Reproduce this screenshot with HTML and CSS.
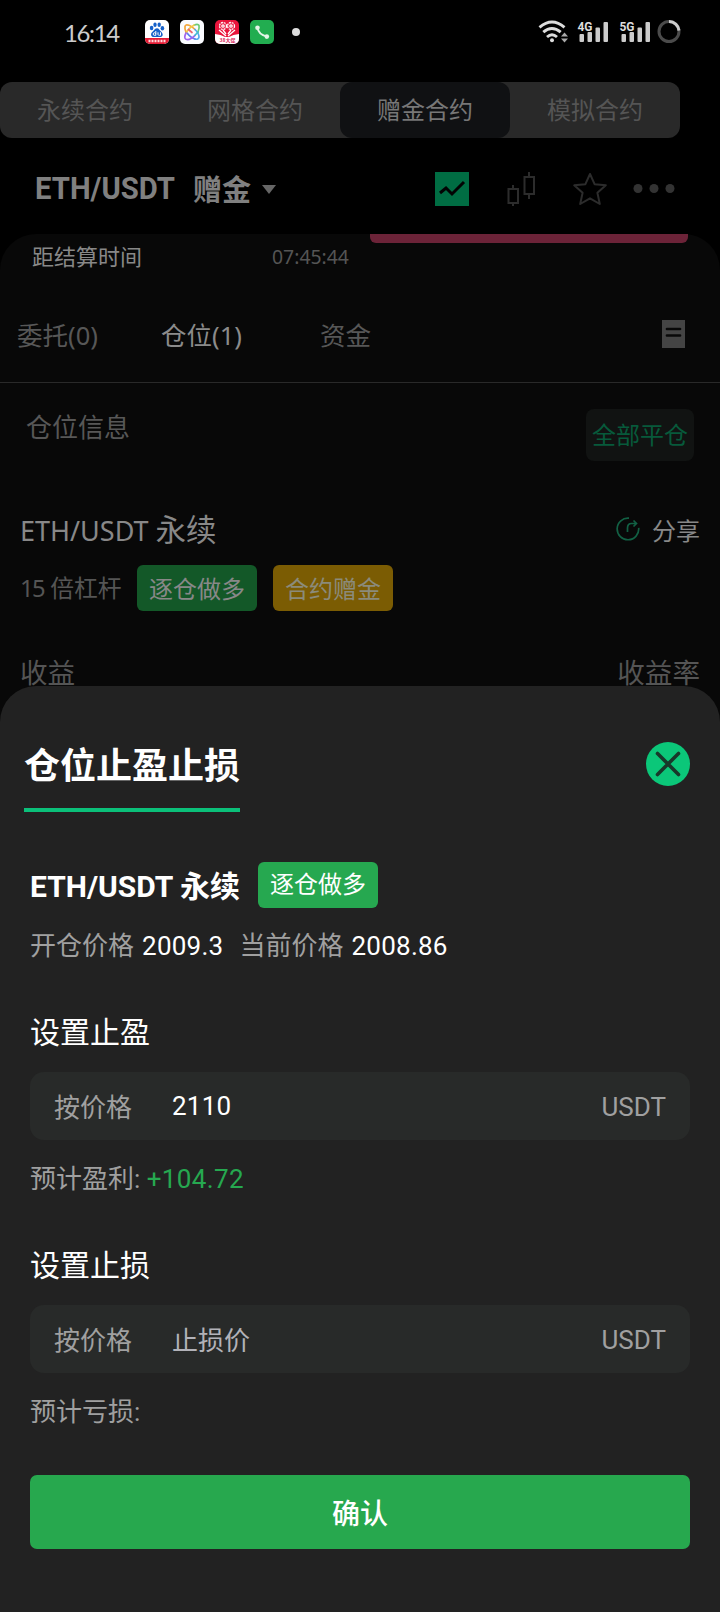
FILE: index.html
```html
<!DOCTYPE html>
<html lang="zh-CN">
<head>
<meta charset="utf-8">
<title>仓位止盈止损</title>
<link rel="stylesheet" href="styles.css">
</head>
<body>
<div class="screen">
  <header class="status">
    <span class="clock">16:14</span>
    <div class="apps">
      <svg class="app" viewBox="0 0 24 24"><defs><clipPath id="r"><rect width="24" height="24" rx="5"/></clipPath></defs><g clip-path="url(#r)"><rect width="24" height="24" fill="#fff"/><g fill="#1761c9"><ellipse cx="6.600" cy="8" rx="1.800" ry="2.300"/><ellipse cx="10" cy="4.800" rx="1.700" ry="2.300"/><ellipse cx="14.200" cy="4.800" rx="1.700" ry="2.300"/><ellipse cx="17.400" cy="8.200" rx="1.800" ry="2.300"/><path d="M12 8.200c2 0 2.600 2 4 3.200 2.800 2.400 2 5.600-1 5.600H9c-3.400 0-4-3.600-1-5.800 1.400-1.200 2-3 4-3z"/></g><path d="M10.800 11v4.300H9.300a1.300 1.300 0 1 1 1.500-1.500M13 12.300v2.200q.3.900 1.300.8h1.200v-3" fill="none" stroke="#fff" stroke-width="1"/><rect y="18" width="24" height="6" fill="#e51c35"/><path d="M3.500 21h17" stroke="#ffd7db" stroke-width="2.500" stroke-dasharray="2 1"/></g></svg>
      <svg class="app" viewBox="0 0 24 24"><rect width="24" height="24" rx="5" fill="#fafbff"/><g fill="none" stroke-width="1.700" stroke-linecap="round"><path d="M6 12Q4.500 9 5 6.500 5.500 4 9 5.300q3 1.200 6 4.200" stroke="#f3a63b"/><path d="M15 9.500q4 4 4 7.500-.5 3-4 2" stroke="#53a9ed"/><path d="M15 19q-4-1-8-6" stroke="#5b7df0"/><path d="M18 12q1.700-4 1-6.500-1-2-5-.3" stroke="#6dca77"/><path d="M14 5.200Q9 7.500 6 13" stroke="#f2ca45"/><path d="M6 13q-2.500 5 0 6.300 4 1.200 9-4" stroke="#a063ed"/><path d="M15 15.300l3-3.300" stroke="#3fbdd0"/><path d="m8.500 9.500 3.500 3" stroke="#ed6670"/></g></svg>
      <svg class="app" viewBox="0 0 24 24"><g clip-path="url(#r)"><rect width="24" height="24" fill="#e9153c"/><g fill="none" stroke="#fff" stroke-width="1.300"><circle cx="8" cy="6" r="3.500" stroke-dasharray="2 .8"/><circle cx="16" cy="6" r="3.500" stroke-dasharray="2 .8"/><circle cx="8" cy="6" r="1.200"/><circle cx="16" cy="6" r="1.200"/><path d="m4 10 7 6M20 10l-7 6M8 10l3 4M16 10l-3 4"/></g><path d="M0 14q6 .5 10 3h4q4-2.500 10-3v10H0z" fill="#fff"/></g><text class="app-caption" x="4.500" y="22">38大促</text></svg>
      <svg class="app" viewBox="0 0 24 24"><rect width="24" height="24" rx="5" fill="#22ad50"/><path d="M7.500 8q1.200 6.500 9 8.500" fill="none" stroke="#e4f5e8" stroke-width="1.800"/><circle cx="7.500" cy="7.800" r="2.300" fill="#e4f5e8"/><circle cx="16.800" cy="16.600" r="2.300" fill="#e4f5e8"/></svg>
    </div>
    <i class="dot"></i>
    <svg class="signals" viewBox="0 0 144 26"><g fill="none" stroke="#ddd" stroke-width="2.900"><path d="M2.500 7.300q12.500-10.500 25 0M6.300 12.200q8.500-7.500 17.400 0M10 17q5-4.500 10 0"/></g><circle cx="15" cy="20.300" r="2" fill="#ddd"/><path d="m24 16.500 3.500-4 3.500 4zM24 18.500l3.500 4 3.500-4z" fill="#aaa"/><g fill="#ccc"><rect x="42.500" y="14" width="4.500" height="8" rx="1"/><rect x="50.500" y="12" width="4.500" height="10" rx="1"/><rect x="58.500" y="7.500" width="4.500" height="14.500" rx="1"/><rect x="66.500" y="2" width="4.500" height="20" rx="1"/><rect x="84.500" y="14" width="4.500" height="8" rx="1"/><rect x="92.500" y="12" width="4.500" height="10" rx="1"/><rect x="100.500" y="7.500" width="4.500" height="14.500" rx="1"/><rect x="108.500" y="2" width="4.500" height="20" rx="1"/></g><text class="net" x="40.500" y="11" textLength="15" lengthAdjust="spacingAndGlyphs">4G</text><text class="net" x="82.500" y="11" textLength="15" lengthAdjust="spacingAndGlyphs">5G</text><circle cx="132" cy="11.500" r="10" fill="none" stroke="#4b4b4b" stroke-width="3"/><path d="M132 1.500a10 10 0 0 1 10 9" fill="none" stroke="#ccc" stroke-width="3"/></svg>
  </header>

  <nav class="modes"><span>永续合约</span><span>网格合约</span><span class="on">赠金合约</span><span>模拟合约</span></nav>

  <div class="pair">
    <svg class="symbol" viewBox="0 0 158 40"><text x="0" y="30" textLength="140" lengthAdjust="spacingAndGlyphs">ETH/USDT</text></svg><b class="bonus">赠金</b><i class="caret"></i>
    <svg class="tools" viewBox="0 0 242 36"><rect x="0" y="1" width="34" height="34" fill="#006d43"/><path d="m5 22 6-5 6 6 12-12" fill="none" stroke="#020303" stroke-width="3"/><g fill="none" stroke="#2c2c2c" stroke-width="2"><rect x="73.500" y="18" width="9.500" height="14"/><path d="M78 14v4M78 32v3M94 1v5M94 23v5"/><rect x="89.500" y="6" width="9.500" height="17"/><path stroke-linejoin="round" d="m155 3 4.600 10.200 11.200 1.100-8.400 7.500 2.400 11.200-9.800-5.700-9.800 5.700 2.400-11.200-8.400-7.500 11.200-1.100z"/></g><g fill="#333"><circle cx="203" cy="17.500" r="4.500"/><circle cx="219" cy="17.500" r="4.500"/><circle cx="235" cy="17.500" r="4.500"/></g></svg>
  </div>

  <main class="panel">
    <div class="settle"><span class="settle-label">距结算时间</span><span class="countdown">07:45:44</span><i class="sell"></i></div>
    <div class="tabs"><span class="orders">委托(0)</span><span class="positions">仓位(1)</span><span class="funds">资金</span><svg class="history" viewBox="0 0 23 28"><path d="M0 0h23v28H0z" fill="#444"/><path d="M5 9h13M5 15.500h13" stroke="#080808" stroke-width="2.700" stroke-linecap="round"/></svg></div>
    <div class="info"><span>仓位信息</span><button class="close-all">全部平仓</button></div>
    <div class="position"><span class="name">ETH/USDT <span class="cn">永续</span></span><span class="share"><svg class="share-icon" viewBox="0 0 24 24" fill="none" stroke="#126044" stroke-width="1.700"><path d="M13 1.200a10.800 10.800 0 1 0 9.700 9.700"/><path d="M11.500 15V11q0-4.500 4-4.500h5M17.500 3.500l3 3-3 3"/></svg>分享</span></div>
    <div class="leverage"><span class="times"><span class="count">15</span> 倍杠杆</span><span class="tag dim">逐仓做多</span><span class="tag gold">合约赠金</span></div>
    <div class="profit"><span>收益</span><span>收益率</span></div>
  </main>

  <section class="sheet">
    <div class="sheet-head"><h1>仓位止盈止损</h1><svg class="close" viewBox="0 0 44 44"><circle cx="22" cy="22" r="22" fill="#0bc779"/><path d="m11.500 11.500 21 21M32.500 11.500l-21 21" stroke="#18382a" stroke-width="3.600" stroke-linecap="round"/></svg></div>
    <div class="contract"><b>ETH/USDT 永续</b><span class="tag">逐仓做多</span></div>
    <div class="prices"><span>开仓价格</span><em>2009.3</em><span class="current">当前价格</span><em>2008.86</em></div>
    <div class="group"><h2>设置止盈</h2><div class="field"><span class="field-label">按价格</span><span class="value">2110</span><span>USDT</span></div><p>预计盈利: <span class="gain">+104.72</span></p></div>
    <div class="group"><h2>设置止损</h2><div class="field"><span class="field-label">按价格</span><span class="value hint">止损价</span><span>USDT</span></div><p>预计亏损:</p></div>
    <button class="confirm">确认</button>
  </section>
</div>
</body>
</html>
```
FILE: styles.css
```css
* { box-sizing: border-box; }
body { margin: 0; background: #000; }
.screen { width: 720px; height: 1612px; overflow: hidden; display: flex; flex-direction: column; font-family: "Noto Sans", "Noto Sans CJK SC", sans-serif; color: #888; white-space: nowrap; }
.screen svg { display: block; flex: none; }
button { border: 0; padding: 0; font: inherit; }
.status { height: 82px; flex: none; display: flex; align-items: flex-start; padding: 20px 39px 0 64px; }
.clock { width: 81px; font: 24px/26px Lato, sans-serif; letter-spacing: -1.4px; color: #ccc; }
.apps { display: flex; gap: 11px; }
.app { width: 24px; height: 24px; }
.app-caption { font: bold 5px "Noto Sans CJK SC", sans-serif; fill: #d9285a; }
.dot { width: 8px; height: 8px; border-radius: 50%; background: #ddd; margin: 8px 0 0 18px; }
.signals { width: 144px; height: 26px; margin-left: auto; }
.net { font: bold 12.5px Roboto, sans-serif; fill: #ddd; stroke: #000; stroke-width: 2px; paint-order: stroke; }
.modes { width: 680px; height: 56px; flex: none; display: flex; background: #292929; border-radius: 12px; font-size: 24px; line-height: 56px; color: #555; }
.modes span { width: 170px; text-align: center; }
.modes .on { background: #101113; color: #777; border-radius: 12px; }
.pair { height: 96px; flex: none; display: flex; align-items: center; padding: 6px 43px 0 35px; color: #808080; }
.symbol { width: 158px; height: 40px; font: bold 31px Roboto, sans-serif; fill: #808080; }
.bonus { font: bold 29px/40px "Noto Sans CJK SC", sans-serif; margin-top: -2px; }
.caret { border: 7px solid transparent; border-top: 9px solid #666; border-bottom: 0; margin-left: 11px; }
.tools { width: 242px; height: 36px; margin-left: auto; }
.panel { height: 488px; flex: none; background: #080808; border-radius: 36px 36px 0 0; }
.settle { height: 56px; display: flex; padding: 0 32px; }
.settle-label { width: 240px; font-size: 22px; line-height: 44px; }
.countdown { width: 98px; font-size: 19.4px; line-height: 46px; color: #555; }
.sell { width: 318px; height: 9px; background: #6c2338; border-radius: 0 0 6px 6px; }
.tabs { height: 93px; display: flex; border-bottom: 1px solid #292929; padding: 27px 35px 0 17px; font-size: 25.5px; line-height: 36px; color: #575757; }
.orders { width: 144px; }
.positions { width: 159px; color: #8b8b8b; }
.history { width: 23px; height: 28px; margin: 3px 0 0 auto; }
.info { height: 115px; display: flex; justify-content: space-between; padding: 26px 26px 0; font-size: 26px; line-height: 36px; color: #575757; }
.close-all { width: 108px; height: 52px; border-radius: 8px; background: #111312; color: #075a3b; font-size: 24px; }
.position { height: 67px; display: flex; justify-content: space-between; align-items: center; padding: 0 20px 5px; }
.name { font-size: 27px; margin-top: -3px; }
.cn { font-size: 30.5px; }
.share { display: flex; align-items: center; gap: 12px; font-size: 24px; }
.share-icon { width: 24px; height: 24px; }
.leverage { height: 46px; display: flex; padding-left: 20px; font-size: 24px; line-height: 46px; color: #555; }
.times { width: 117px; }
.count { letter-spacing: -1.6px; }
.leverage .tag + .tag { margin-left: 16px; }
.times { font-size: 23.8px; }
.tag { width: 120px; height: 46px; border-radius: 6px; background: #26a850; color: #fff; text-align: center; font-size: 24px; line-height: 47px; }
.dim { background: #135828; color: #888; }
.gold { background: #7b5c03; color: #8b8b7b; }
.profit { display: flex; justify-content: space-between; padding: 41px 20px 0; font-size: 27.6px; line-height: 40px; color: #555; }
.sheet { height: 926px; flex: none; margin-top: -36px; z-index: 1; background: #222; border-radius: 36px 36px 0 0; padding: 0 30px; font-family: Roboto, "Noto Sans CJK SC", sans-serif; color: #a0a0a0; }
.sheet-head { height: 126px; margin-left: -6px; display: flex; justify-content: space-between; align-items: flex-end; }
h1 { margin: 0; width: 216px; height: 70px; padding-top: 2px; border-bottom: 4px solid #0bc07a; color: #fff; font-size: 36px; line-height: 46px; font-weight: 700; }
.close { width: 44px; height: 44px; margin-bottom: 26px; }
.contract { margin-top: 50px; height: 46px; display: flex; align-items: center; gap: 18px; color: #fff; font-size: 30px; }
.contract b { margin-top: -3px; }
.prices { height: 40px; margin-top: 18px; display: flex; align-items: center; font-size: 26px; line-height: 40px; }
.prices em { font-style: normal; color: #fff; margin-left: 8px; letter-spacing: .25px; }
.current { margin-left: 16px; }
.group { height: 233px; padding-top: 47px; }
h2 { margin: 0 0 19px; color: #fff; font-size: 30px; line-height: 40px; font-weight: 400; }
.field { height: 68px; display: flex; align-items: center; padding: 0 24px; border-radius: 14px; background: #282a29; font-size: 26px; }
.field-label { width: 118px; margin-top: -2px; }
.value { flex: 1; color: #fff; letter-spacing: .25px; }
.field span:last-child { padding-top: 1px; }
.hint { color: #b2b2b8; margin-top: -2px; letter-spacing: 0; }
p { margin: 19px 0 0; font-size: 26px; line-height: 40px; }
.gain { color: #26a850; letter-spacing: .35px; }
.confirm { display: block; width: 660px; height: 74px; margin-top: 43px; border-radius: 7px; background: #27a84e; color: #fff; font-size: 28px; font-weight: 500; }
```
